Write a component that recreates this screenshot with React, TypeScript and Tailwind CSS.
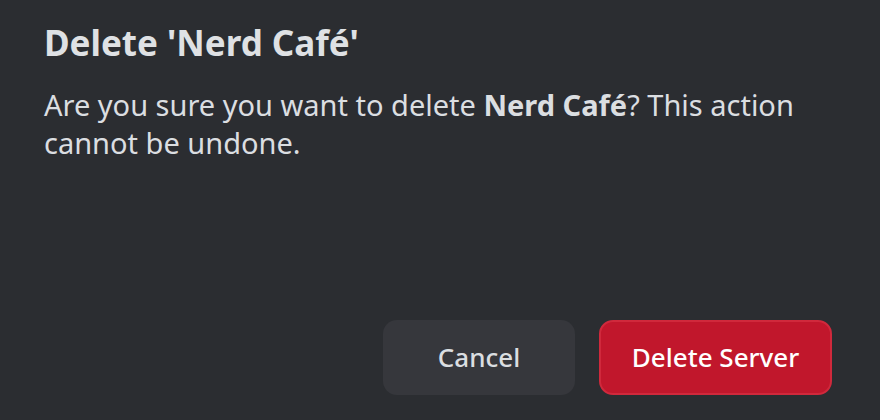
import React from "react";

export default function App() {
  return (
    <div
      className="w-[880px] h-[420px] bg-[#2b2d31] flex flex-col text-[#dbdee1]"
      style={{ fontFamily: '"Noto Sans", Inter, sans-serif' }}
    >
      <div className="pl-[44px] pr-[40px] pt-[22px]">
        <h1 className="text-[35px] leading-[42px] font-bold text-[#dfe1e4]">Delete 'Nerd Café'</h1>
        <p className="mt-[22px] text-[29px] leading-[38px] text-[#dbdee1]">
          Are you sure you want to delete <span className="font-bold">Nerd Café</span>? This action cannot be undone.
        </p>
      </div>
      <div className="mt-auto flex justify-end gap-[24px] pr-[48px] pb-[25px]">
        <button className="w-[192px] h-[75px] rounded-[14px] bg-[#36373c] text-[26px] font-medium text-[#dbdee1]">
          Cancel
        </button>
        <button className="w-[233px] h-[75px] rounded-[14px] bg-[#c1172c] border-2 border-[#d0293c] text-[26px] font-medium text-white">
          Delete Server
        </button>
      </div>
    </div>
  );
}
